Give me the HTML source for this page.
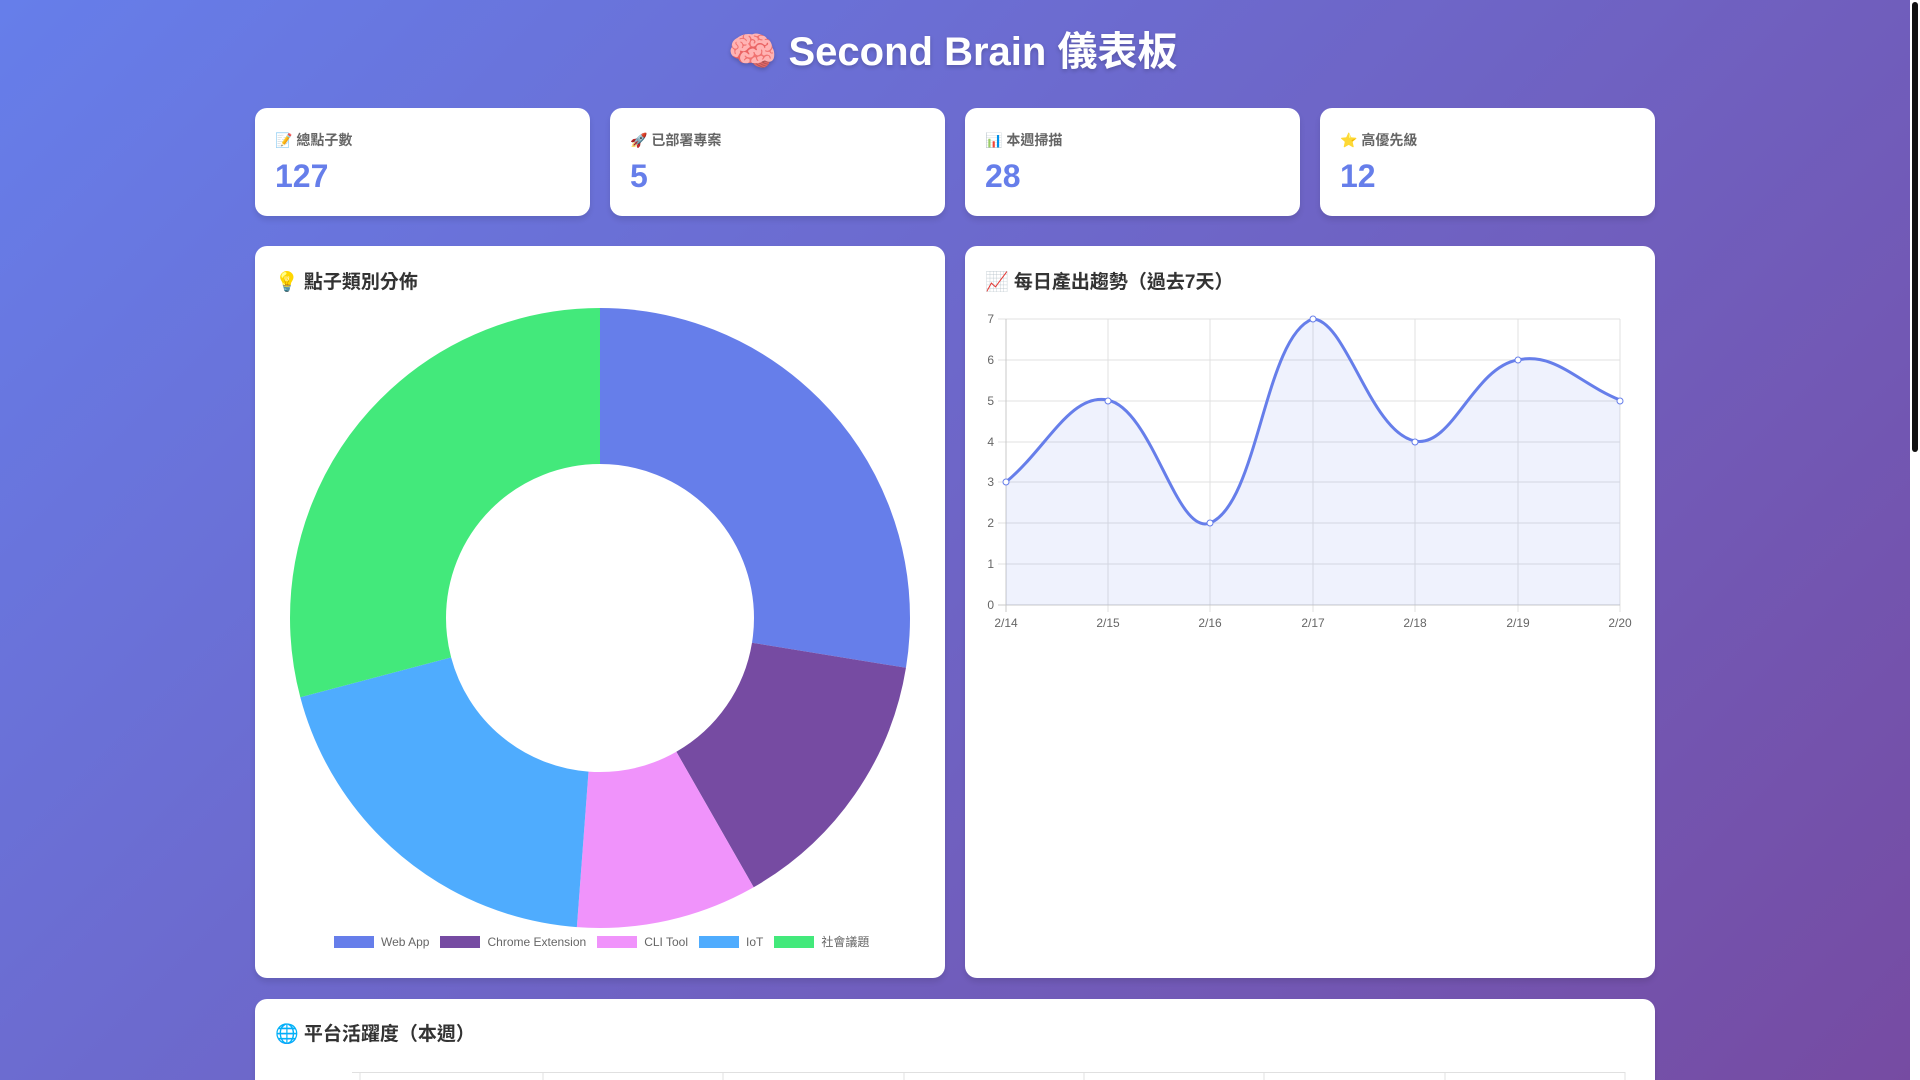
<!DOCTYPE html>
<html><head><meta charset="utf-8">
<style>
*{box-sizing:border-box;margin:0;padding:0}
html,body{width:1920px;height:1080px;overflow:hidden}
body{background:linear-gradient(135deg,#667eea 0%,#764ba2 100%);font-family:"Liberation Sans","Noto Sans CJK TC",sans-serif;position:relative}
h1{position:absolute;left:0;width:1905px;top:19px;text-align:center;color:#fff;font-size:40px;font-weight:bold;text-shadow:0 2px 4px rgba(0,0,0,.2)}
.card{position:absolute;background:#fff;border-radius:12px;box-shadow:0 4px 6px rgba(0,0,0,.1)}
.stat{top:108px;width:335px;height:108px;padding:20px}
.stat .l{position:absolute;left:20px;top:22px;font-size:14px;font-weight:bold;color:#666}
.stat .v{position:absolute;left:20px;font-size:32px;font-weight:bold;color:#667eea;top:50px}
.ct{position:absolute;left:20px;top:21px;font-size:19px;font-weight:bold;color:#333}
.leg{position:absolute;top:933px;left:334px;display:flex;align-items:center;font-size:12px;color:#666;white-space:nowrap}
.leg i{display:inline-block;width:40px;height:12px;margin-right:7px}
.leg span{margin-right:11px}
.sb{position:absolute;right:0;top:0;width:10px;height:1080px;background:#fff}
.sb div{position:absolute;left:2px;top:2px;width:6px;height:450px;background:#111;border-radius:3px}
</style></head><body>
<h1>🧠 Second Brain 儀表板</h1>
<div class="card stat" style="left:255px"><div class="l">📝 總點子數</div><div class="v">127</div></div>
<div class="card stat" style="left:610px"><div class="l">🚀 已部署專案</div><div class="v">5</div></div>
<div class="card stat" style="left:965px"><div class="l">📊 本週掃描</div><div class="v">28</div></div>
<div class="card stat" style="left:1320px"><div class="l">⭐ 高優先級</div><div class="v">12</div></div>

<div class="card" style="left:255px;top:246px;width:690px;height:732px"><div class="ct">💡 點子類別分佈</div></div>
<div class="card" style="left:965px;top:246px;width:690px;height:732px"><div class="ct">📈 每日產出趨勢（過去7天）</div></div>
<div class="card" style="left:255px;top:999px;width:1400px;height:81px;border-radius:12px 12px 0 0"><div class="ct" style="top:20px">🌐 平台活躍度（本週）</div></div>

<svg style="position:absolute;left:0;top:0" width="1920" height="1080">
<g transform="rotate(-90 600 618)" fill="none" stroke-width="156">
<circle cx="600" cy="618" r="232" stroke="#667eea" stroke-dasharray="401.8 2000" stroke-dashoffset="0"/>
<circle cx="600" cy="618" r="232" stroke="#764ba2" stroke-dasharray="206.6 2000" stroke-dashoffset="-401.8"/>
<circle cx="600" cy="618" r="232" stroke="#f093fb" stroke-dasharray="137.7 2000" stroke-dashoffset="-608.4"/>
<circle cx="600" cy="618" r="232" stroke="#4facfe" stroke-dasharray="287 2000" stroke-dashoffset="-746.1"/>
<circle cx="600" cy="618" r="232" stroke="#43e97b" stroke-dasharray="424.6 2000" stroke-dashoffset="-1033.1"/>
</g>
<g stroke="#e0e0e0" stroke-width="1">
<line x1="998" y1="319" x2="1620" y2="319"/><line x1="998" y1="360" x2="1620" y2="360"/><line x1="998" y1="401" x2="1620" y2="401"/><line x1="998" y1="442" x2="1620" y2="442"/><line x1="998" y1="482" x2="1620" y2="482"/><line x1="998" y1="523" x2="1620" y2="523"/><line x1="998" y1="564" x2="1620" y2="564"/>
<line x1="1108" y1="319" x2="1108" y2="612"/><line x1="1210" y1="319" x2="1210" y2="612"/><line x1="1313" y1="319" x2="1313" y2="612"/><line x1="1415" y1="319" x2="1415" y2="612"/><line x1="1518" y1="319" x2="1518" y2="612"/><line x1="1620" y1="319" x2="1620" y2="612"/>
</g>
<g stroke="#c8c8c8"><line x1="998" y1="605" x2="1620" y2="605"/><line x1="1006" y1="319" x2="1006" y2="612"/></g>
<path d="M1006,482 C1046,449.2 1070.6,392.6 1107.5,400 C1152.6,409 1176.3,536.5 1210,523 C1258.3,503.7 1264.2,337.3 1312.5,319 C1346.2,319 1369.9,432 1415,441 C1451.9,448.4 1473,367.9 1517.5,360 C1555,351.5 1579,383.6 1620,400 L1620,605 L1006,605 Z" fill="rgba(102,126,234,0.1)"/>
<path d="M1006,482 C1046,449.2 1070.6,392.6 1107.5,400 C1152.6,409 1176.3,536.5 1210,523 C1258.3,503.7 1264.2,337.3 1312.5,319 C1346.2,319 1369.9,432 1415,441 C1451.9,448.4 1473,367.9 1517.5,360 C1555,351.5 1579,383.6 1620,400" fill="none" stroke="#667eea" stroke-width="3"/>
<g fill="#fff" stroke="#667eea" stroke-width="1"><circle cx="1006" cy="482" r="3"/><circle cx="1108" cy="401" r="3"/><circle cx="1210" cy="523" r="3"/><circle cx="1313" cy="319" r="3"/><circle cx="1415" cy="442" r="3"/><circle cx="1518" cy="360" r="3"/><circle cx="1620" cy="401" r="3"/></g>
<g font-family="Liberation Sans,sans-serif" font-size="12" fill="#666" text-anchor="end">
<text x="994" y="323">7</text><text x="994" y="364">6</text><text x="994" y="405">5</text><text x="994" y="446">4</text><text x="994" y="486">3</text><text x="994" y="527">2</text><text x="994" y="568">1</text><text x="994" y="609">0</text>
</g>
<g font-family="Liberation Sans,sans-serif" font-size="12" fill="#666" text-anchor="middle">
<text x="1006" y="627">2/14</text><text x="1108" y="627">2/15</text><text x="1210" y="627">2/16</text><text x="1313" y="627">2/17</text><text x="1415" y="627">2/18</text><text x="1518" y="627">2/19</text><text x="1620" y="627">2/20</text>
</g>
<g stroke="#e0e0e0"><line x1="352" y1="1072.5" x2="1625" y2="1072.5"/>
<line x1="360" y1="1072" x2="360" y2="1080"/><line x1="543" y1="1072" x2="543" y2="1080"/><line x1="723" y1="1072" x2="723" y2="1080"/><line x1="904" y1="1072" x2="904" y2="1080"/><line x1="1084" y1="1072" x2="1084" y2="1080"/><line x1="1264" y1="1072" x2="1264" y2="1080"/><line x1="1445" y1="1072" x2="1445" y2="1080"/><line x1="1625" y1="1072" x2="1625" y2="1080"/></g>
</svg>
<div class="leg"><i style="background:#667eea"></i><span>Web App</span><i style="background:#764ba2"></i><span>Chrome Extension</span><i style="background:#f093fb"></i><span>CLI Tool</span><i style="background:#4facfe"></i><span>IoT</span><i style="background:#43e97b"></i><span>社會議題</span></div>
<div class="sb"><div></div></div>
</body></html>
